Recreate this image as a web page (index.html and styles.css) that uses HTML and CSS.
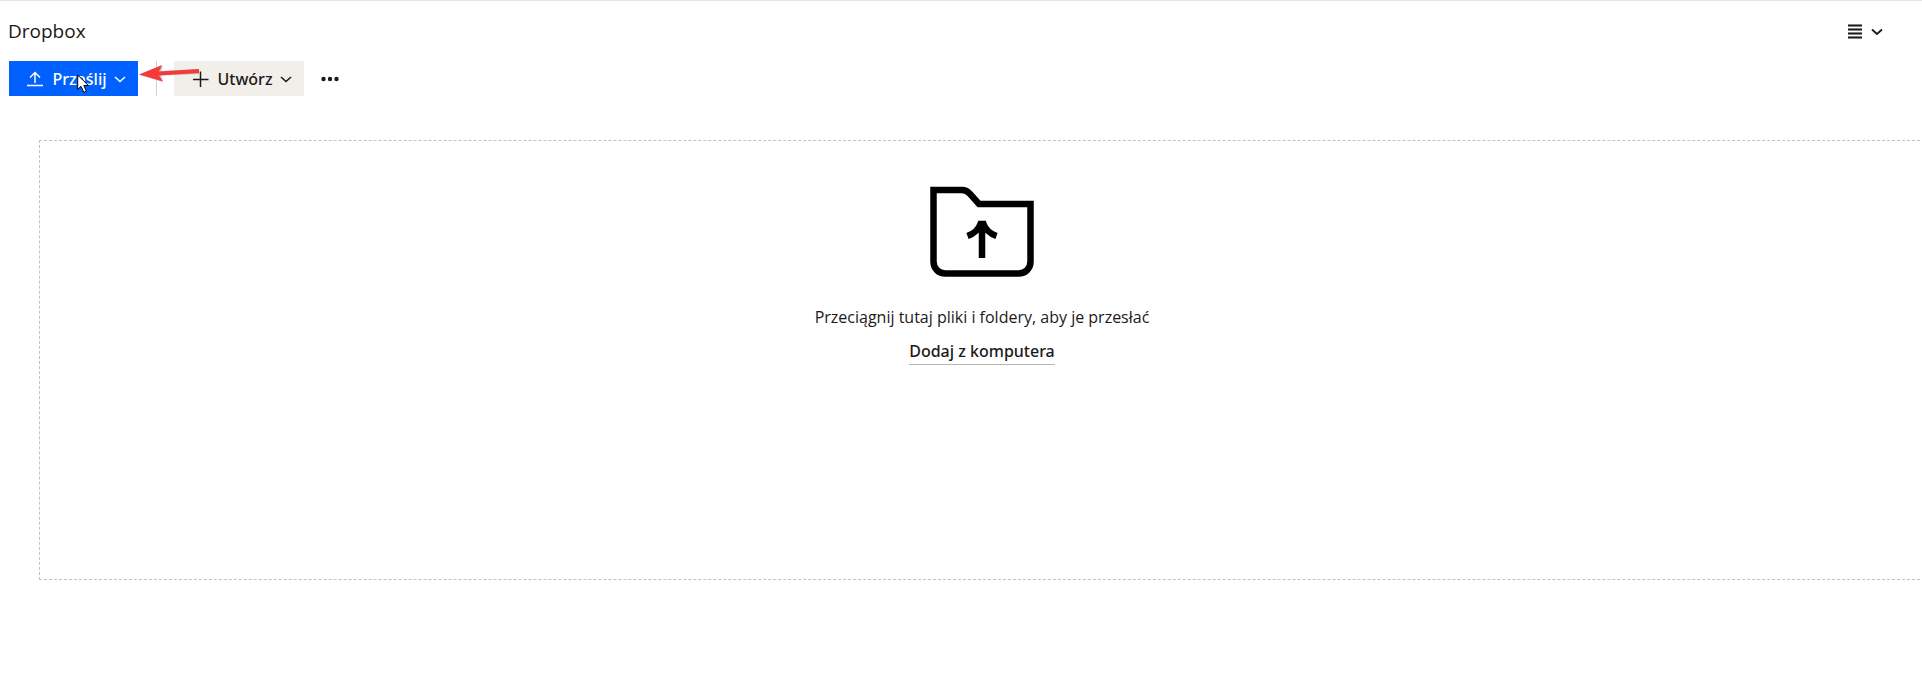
FILE: index.html
```html
<!DOCTYPE html>
<html lang="pl">
<head>
<meta charset="utf-8">
<title>Dropbox</title>
<link rel="stylesheet" href="styles.css">
</head>
<body>
<main class="page">
  <header class="header">
    <h1 class="title">Dropbox</h1>
    <button class="view-button" type="button" aria-label="Widok listy">
      <svg width="14" height="16" viewBox="0 0 14 16"><path d="M0 1.500h14M0 5.500h14M0 9.500h14M0 13.500h14" stroke="#aaa" stroke-width="3"/><path d="M0 1.500h14M0 5.500h14M0 9.500h14M0 13.500h14" stroke="#1e1919" stroke-width="1.400"/></svg>
      <svg width="12" height="8" viewBox="0 0 12 8"><path d="M1 1.500L6 6l5-4.500" fill="none" stroke="#1e1919" stroke-width="1.800"/></svg>
    </button>
  </header>
  <div class="toolbar">
    <button class="button button-primary" type="button">
      <svg width="18" height="16" viewBox="0 0 18 16"><path d="M0 14.500h16M8 12V2M3 6.500L8 1.500l5 5" fill="none" stroke="currentColor" stroke-width="1.500"/></svg>
      <span class="label">Prześlij</span>
      <svg width="12" height="8" viewBox="0 0 12 8"><path d="M1 2L6 6.500l5-4.500" fill="none" stroke="currentColor" stroke-width="1.500"/></svg>
    </button>
    <span class="divider"></span>
    <button class="button button-secondary" type="button">
      <svg width="18" height="16" viewBox="0 0 18 16"><path d="M1 8.500h15.500M8.500 .5v15.500" fill="none" stroke="currentColor" stroke-width="1.500"/></svg>
      <span class="label">Utwórz</span>
      <svg width="12" height="8" viewBox="0 0 12 8"><path d="M1 2L6 6.500l5-4.500" fill="none" stroke="currentColor" stroke-width="1.600"/></svg>
    </button>
    <button class="more-button" type="button" aria-label="Więcej">
      <svg width="18" height="6" viewBox="0 0 18 6" fill="#1e1919"><circle cx="2.500" cy="3" r="2.200"/><circle cx="9" cy="3" r="2.200"/><circle cx="15.500" cy="3" r="2.200"/></svg>
    </button>
    <svg class="pointer-arrow" width="62" height="20" viewBox="0 0 62 20"><path d="M1 12L24 3l-2 5L60 6v5L22 12.500 24 19z" fill="#888" opacity=".5"/><path d="M0 11.500L23 2l-3 6.500L60 6v4L20 12.500l4 6z" fill="#f43b3b"/></svg>
    <svg class="cursor" width="13" height="20" viewBox="0 0 13 20"><path d="M.7 1v14.500L4 12.300l2.800 6 2.600-1.100-2.600-5.700h4.600z" fill="#fff" stroke="#000"/></svg>
  </div>
  <section class="dropzone">
    <svg class="folder" width="104" height="92" viewBox="0 0 104 92"><path d="M3.500 4H32c3.500 0 6 1.500 8 4L49 18h51.500v57.500c0 7-5 12-12 12h-73c-7 0-12-5-12-12z" fill="none" stroke="#000" stroke-width="6.500"/><path d="M52 72V39M37.500 50c7-2.500 11-6.500 13-12h3c2 5.500 6 9.500 13 12" fill="none" stroke="#000" stroke-width="6.500"/></svg>
    <p class="hint">Przeciągnij tutaj pliki i foldery, aby je przesłać</p>
    <a class="add-link" href="#">Dodaj z komputera</a>
  </section>
</main>
</body>
</html>
```
FILE: styles.css
```css
* {
  box-sizing: border-box;
}

body {
  margin: 0;
  background: #fff;
  color: #1e1919;
  font-family: "Noto Sans", sans-serif;
  font-size: 16px;
  line-height: 24px;
}

button {
  border: 0;
  padding: 0;
  background: none;
  color: inherit;
  font: inherit;
}

svg {
  display: block;
  flex: none;
}

.page {
  border-top: 1px solid #e9e4dc;
  overflow: hidden;
}

.header {
  display: flex;
  align-items: center;
  justify-content: space-between;
  height: 60px;
  padding: 0 39px 0 8px;
}

.title {
  margin: 0;
  font-family: "Open Sans", sans-serif;
  font-size: 19px;
  font-weight: 400;
}

.view-button {
  display: flex;
  align-items: center;
  gap: 9px;
  padding-top: 2px;
}

.toolbar {
  position: relative;
  display: flex;
  align-items: center;
  padding-left: 9px;
}

.button {
  display: flex;
  align-items: center;
  justify-content: space-between;
  width: 129px;
  height: 35px;
  padding: 0 12px 0 18px;
}

.label {
  font-weight: 500;
}

.button-primary {
  background: #0061fe;
  color: #fff;
}

.button-secondary {
  width: 130px;
  background: #f2eeea;
}

.divider {
  width: 1px;
  height: 35px;
  margin: 0 17px 0 18px;
  background: #d3d1d1;
}

.more-button {
  margin-left: 17px;
}

.pointer-arrow {
  position: absolute;
  left: 139px;
  top: 2px;
}

.cursor {
  position: absolute;
  left: 77px;
  top: 13px;
}

.dropzone {
  display: flex;
  flex-direction: column;
  align-items: center;
  min-height: 440px;
  margin: 44px -3px 0 39px;
  padding-top: 45px;
  border: 1px dashed #c3c1c1;
}

.hint {
  margin: 27px 0 10px;
  font-family: "Open Sans", sans-serif;
}

.add-link {
  border-bottom: 1px solid #bbb5ae;
  color: inherit;
  font-weight: 500;
  line-height: 25px;
  text-decoration: none;
}
```
